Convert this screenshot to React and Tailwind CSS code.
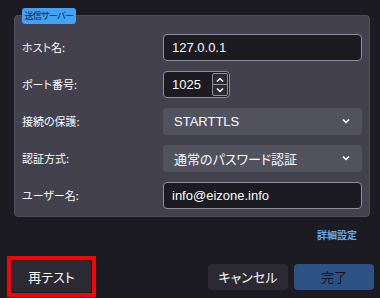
const jp = "font-['Noto_Sans_CJK_JP','Noto_Sans',sans-serif] [font-feature-settings:'palt']";
const latin = "font-['Liberation_Sans','Noto_Sans_CJK_JP',sans-serif]";

function Chevron({ up = false, className = "" }) {
  return (
    <svg width="8" height="5" viewBox="0 0 8 5" className={className}>
      <polyline
        points={up ? "1,4.5 4,1.5 7,4.5" : "1,0.5 4,3.5 7,0.5"}
        fill="none"
        stroke="#fbfbfe"
        strokeWidth="1.5"
      />
    </svg>
  );
}

function Row({ label, children }) {
  return (
    <div className="flex items-center h-[27px]">
      <span className={`flex-1 text-[11px] text-[#fbfbfe] ${jp}`}>{label}</span>
      <div className="w-[199px] h-full">{children}</div>
    </div>
  );
}

function TextInput({ value }) {
  return (
    <div className={`h-full w-full flex items-center px-[8px] bg-[#1c1b22] border border-[#8f8f9d] rounded-[4px] text-[13px] text-[#fbfbfe] ${latin}`}>
      {value}
    </div>
  );
}

function Select({ value, font }) {
  return (
    <div className={`h-full w-full flex items-center justify-between pl-[11px] pr-[12px] bg-[#52525e] rounded-[4px] text-[13px] text-[#fbfbfe] ${font}`}>
      <span>{value}</span>
      <Chevron />
    </div>
  );
}

export default function App() {
  return (
    <div className="w-[380px] h-[298px] bg-[#1c1b22] overflow-hidden pt-[15px]">
      <div className="relative ml-[14px] w-[356px] bg-[#42414d] border border-[#4f4e5a] rounded-[4px] pt-[18px] pl-[7px] pr-[7px] pb-[7px] flex flex-col gap-[10px]">
        <div className={`absolute left-[7px] -top-[8px] w-[54px] h-[16px] flex items-center justify-center bg-[#42a2f5] rounded-[3px] text-[9px] tracking-[-0.6px] whitespace-nowrap text-[#1c1b22] ${jp}`}>
          送信サーバー
        </div>
        <Row label="ホスト名:">
          <TextInput value="127.0.0.1" />
        </Row>
        <Row label="ポート番号:">
          <div className="h-full w-[67px] flex bg-[#1c1b22] border border-[#8f8f9d] rounded-[4px]">
            <div className={`flex-1 flex items-center pl-[8px] text-[13px] text-[#fbfbfe] ${latin}`}>1025</div>
            <div className="w-[16px] my-[1px] mr-[1px] flex flex-col border border-[#8f8f9d] rounded-[2px] bg-[#2b2a33]">
              <div className="flex-1 flex items-center justify-center border-b border-[#8f8f9d]">
                <Chevron up />
              </div>
              <div className="flex-1 flex items-center justify-center">
                <Chevron />
              </div>
            </div>
          </div>
        </Row>
        <Row label="接続の保護:">
          <Select value="STARTTLS" font={latin} />
        </Row>
        <Row label="認証方式:">
          <Select value="通常のパスワード認証" font={jp} />
        </Row>
        <Row label="ユーザー名:">
          <TextInput value="info@eizone.info" />
        </Row>
      </div>

      <div className="flex justify-end pr-[23px] mt-[10px]">
        <span className={`text-[10px] font-bold text-[#5cabf5] ${jp}`}>詳細設定</span>
      </div>

      <div className="flex items-center mt-[14px] pl-[7px]">
        <div className="border-[4px] border-[#ff0000] p-px">
          <div className={`w-[79px] h-[31px] flex items-center justify-center bg-[#2b2a33] rounded-[3px] text-[13px] text-[#fbfbfe] ${jp}`}>
            再テスト
          </div>
        </div>
        <div className={`ml-[112px] w-[80px] h-[26px] flex items-center justify-center bg-[#2b2a33] rounded-[4px] text-[13px] text-[#fbfbfe] ${jp}`}>
          キャンセル
        </div>
        <div className={`ml-[6px] w-[80px] h-[26px] flex items-center justify-center bg-[#2c5283] rounded-[4px] text-[13px] text-[#15141a] ${jp}`}>
          完了
        </div>
      </div>
    </div>
  );
}
